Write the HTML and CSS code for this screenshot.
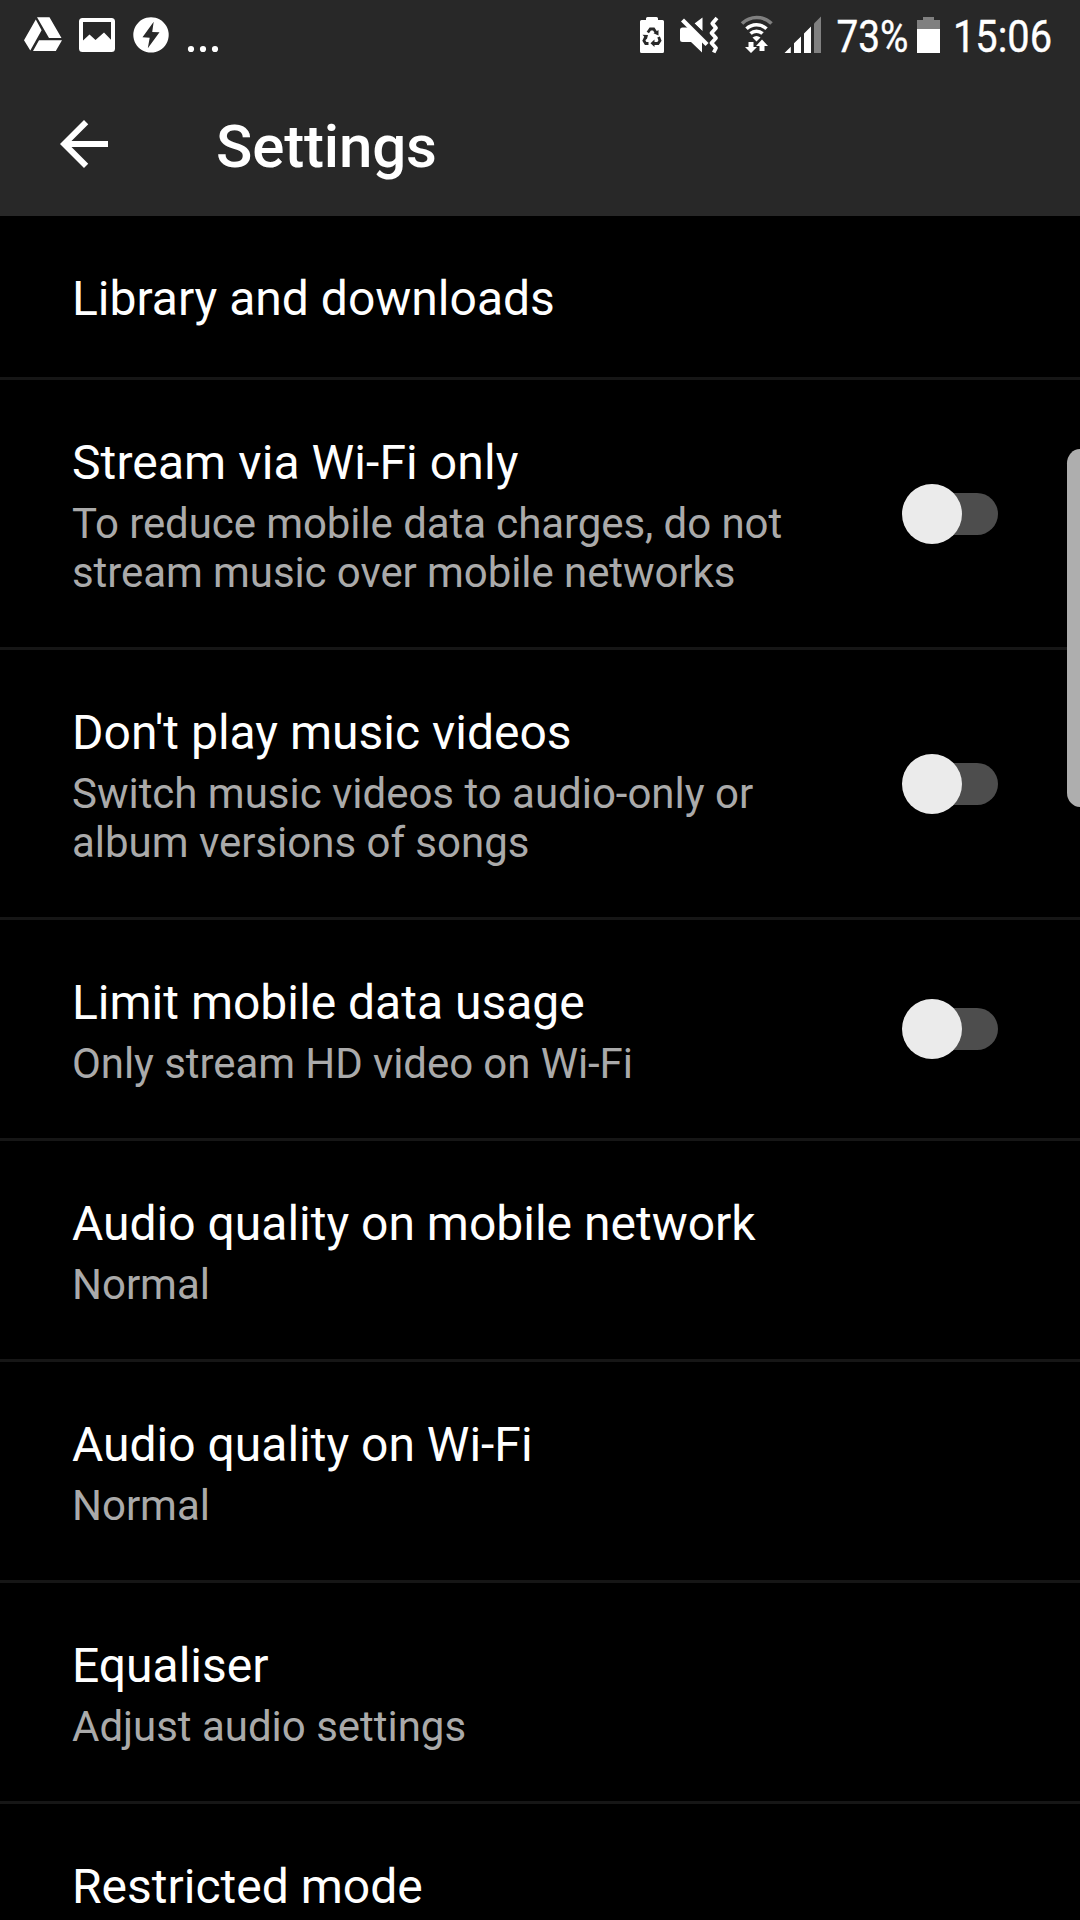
FILE: index.html
```html
<!DOCTYPE html>
<html lang="en-GB">
<head>
<meta charset="utf-8">
<title>Settings</title>
<link rel="stylesheet" href="styles.css">
</head>
<body>
<div class="screen">
  <header class="top">
    <div class="status">
      <div class="status-group">
        <svg class="icon" width="72" height="72" viewBox="0 0 72 72"><path d="M37 17.300h12.500L61.500 38H49zM35.800 19.500l5.800 10.700L30.300 50.500 24 40.300zM39 40.300h23L55.800 51H33z"/></svg>
        <svg class="icon" width="54" height="72" viewBox="72 0 54 72"><path fill-rule="evenodd" d="M82.500 18h29q3.500 0 3.500 3.500v27q0 3.500-3.500 3.500h-29q-3.500 0-3.500-3.500v-27q0-3.500 3.500-3.500zM83 22v18.500l6.500-6 6 5.500 8.500-7.500 7 7.300V22z"/></svg>
        <svg class="icon" width="54" height="72" viewBox="126 0 54 72"><path fill-rule="evenodd" d="M151 17.200a17.700 17.700 0 1 0 .01 0zM153.700 21.800l-11.200 15.500 7.200.5-1.900 10.500 11.700-16-7.300-.4z"/></svg>
        <svg class="icon" width="60" height="72" viewBox="180 0 60 72"><circle cx="191" cy="49" r="3.100"/><circle cx="203" cy="49" r="3.100"/><circle cx="215" cy="49" r="3.100"/></svg>
      </div>
      <div class="status-group">
        <svg class="icon" width="44" height="72" viewBox="630 0 44 72"><path d="M646 20v-1.500q0-1.500 1.500-1.500h9q1.500 0 1.500 1.500V20h4.500q1.500 0 1.500 1.500v30q0 1.500-1.500 1.500h-21q-1.500 0-1.500-1.500v-30q0-1.500 1.500-1.500z"/><g class="cut"><path d="M647.800 32.500l2.500-3.500h3.400l2.500 3.700M658.600 37l1.400 3.500-2 3h-5M648.500 43.500h-2.800l-1.800-2.800 1.900-4"/></g><path class="dark" d="M658.500 30v5.500l-5-2.300zM654.500 39.500v7.500l-4-3.700zM642.500 34.800l5.500.2-1.200 4.500z"/></svg>
        <svg class="icon" width="60" height="72" viewBox="674 0 60 72"><path d="M680 30q0-2.500 2.500-2.500h8L702 39v13.500L691 42h-8.500q-2.500 0-2.500-2.500zM702.500 17.500V31L694.500 23.500z"/><path class="slash-gap" d="M684 16.500l26 26"/><path class="slash" d="M682.500 20l24.500 24.500"/><path class="vibration" d="M717 18l-4.700 5.500 3.700 4.500-4.500 5 4.500 5-4.500 5 4.500 5-2.300 4.500"/></svg>
        <svg class="icon" width="44" height="72" viewBox="734 0 44 72"><g class="arcs"><path class="dim-line" d="M742 23.500a21 21 0 0 1 29.500 0"/><path d="M746.500 28.800a14.500 14.500 0 0 1 20 0M750.500 33.500a9 9 0 0 1 12 0"/></g><path d="M752.500 37.500q4-3 8 0l-4 4zM748.500 42h5v5h3.500l-6 6-6-6h3.500zM762 39.500l6 6.500h-3.500v5h-5v-5H756z"/></svg>
        <svg class="icon" width="50" height="72" viewBox="778 0 50 72"><path d="M784.500 53l6.300-6.300V53zM794 43.300l7-6.800V53h-7zM804 33.500l7-7V53h-7z"/><path class="dim" d="M814 23.500l7-7V53h-7z"/></svg>
        <svg class="icon" width="86" height="72" viewBox="828 0 86 72"><text x="836.500" y="52" textLength="72" lengthAdjust="spacingAndGlyphs">73%</text></svg>
        <svg class="icon" width="34" height="72" viewBox="914 0 34 72"><path class="dim" d="M923 20v-3h11v3h6v10h-23V20z"/><path d="M917 29h23v24h-23z"/></svg>
        <svg class="icon" width="132" height="72" viewBox="948 0 132 72"><text x="953" y="52" textLength="99" lengthAdjust="spacingAndGlyphs">15:06</text></svg>
      </div>
    </div>
    <div class="toolbar">
      <svg class="back" width="72" height="72" viewBox="0 0 24 24"><path d="M20 11H7.830l5.590-5.590L12 4l-8 8 8 8 1.410-1.410L7.830 13H20z"/></svg>
      <h1>Settings</h1>
    </div>
  </header>
  <main class="list">
    <section class="row"><div class="text"><h2>Library and downloads</h2></div></section>
    <section class="row"><div class="text"><h2 class="loose">Stream via Wi-Fi only</h2><p class="tight">To reduce mobile data charges, do not<br>stream music over mobile networks</p></div><span class="switch"></span></section>
    <section class="row"><div class="text"><h2>Don't play music videos</h2><p>Switch music videos to audio-only or<br>album versions of songs</p></div><span class="switch"></span></section>
    <section class="row"><div class="text"><h2>Limit mobile data usage</h2><p class="tight">Only stream HD video on Wi-Fi</p></div><span class="switch"></span></section>
    <section class="row"><div class="text"><h2>Audio quality on mobile network</h2><p>Normal</p></div></section>
    <section class="row"><div class="text"><h2>Audio quality on Wi-Fi</h2><p>Normal</p></div></section>
    <section class="row"><div class="text"><h2>Equaliser</h2><p>Adjust audio settings</p></div></section>
    <section class="row"><div class="text"><h2>Restricted mode</h2></div></section>
  </main>
  <div class="scrollbar"></div>
</div>
</body>
</html>
```
FILE: styles.css
```css
* { box-sizing: border-box; }
body { margin: 0; background: #000; }
h1, h2, p { margin: 0; font-weight: 400; white-space: nowrap; }
.screen {
  position: relative;
  width: 1080px;
  height: 1920px;
  overflow: hidden;
  background: #000;
  color: #fff;
  font-family: Roboto, sans-serif;
}
.top { height: 216px; background: #282828; }
.status { display: flex; justify-content: space-between; height: 72px; }
.status-group { display: flex; }
.icon { display: block; overflow: visible; fill: #fff; font-size: 45px; }
.icon text { stroke: #fff; stroke-width: .4; }
.dim { fill: #808080; }
.dark { fill: #282828; }
.cut path { fill: none; stroke: #282828; stroke-width: 2.8; }
.slash-gap { fill: none; stroke: #282828; stroke-width: 5; }
.slash { fill: none; stroke: #fff; stroke-width: 4.2; }
.vibration { fill: none; stroke: #fff; stroke-width: 3.8; stroke-linejoin: round; }
.arcs path { fill: none; stroke: #fff; stroke-width: 3.6; }
.arcs .dim-line { stroke: #808080; }
.toolbar { display: flex; align-items: center; height: 144px; padding-left: 48px; }
.back { display: block; fill: #fff; }
.toolbar h1 { margin-left: 96px; padding-top: 6px; font-size: 60px; line-height: 70px; font-weight: 500; letter-spacing: -.15px; }
.row {
  display: flex;
  align-items: center;
  justify-content: space-between;
  padding: 0 82px 0 72px;
  border-bottom: 3px solid #161616;
}
.text { padding: 54.500px 0 50.500px; }
h2 { font-size: 48px; line-height: 56px; }
h2.loose { letter-spacing: .1px; }
p { margin-top: 8px; font-size: 42px; line-height: 49px; letter-spacing: -.02px; color: #aaa; }
p.tight { letter-spacing: -.08px; }
.switch {
  display: flex;
  align-items: center;
  width: 84px;
  height: 42px;
  border-radius: 21px;
  background: #4d4d4d;
}
.switch::before {
  content: "";
  flex: none;
  width: 60px;
  height: 60px;
  margin-left: -12px;
  border-radius: 50%;
  background: #ebebeb;
}
.scrollbar {
  position: absolute;
  right: 0;
  top: 449px;
  width: 13.500px;
  height: 358px;
  border-radius: 20px 0 0 20px / 22px 0 0 22px;
  background: rgba(180, 180, 180, .970);
}
```
